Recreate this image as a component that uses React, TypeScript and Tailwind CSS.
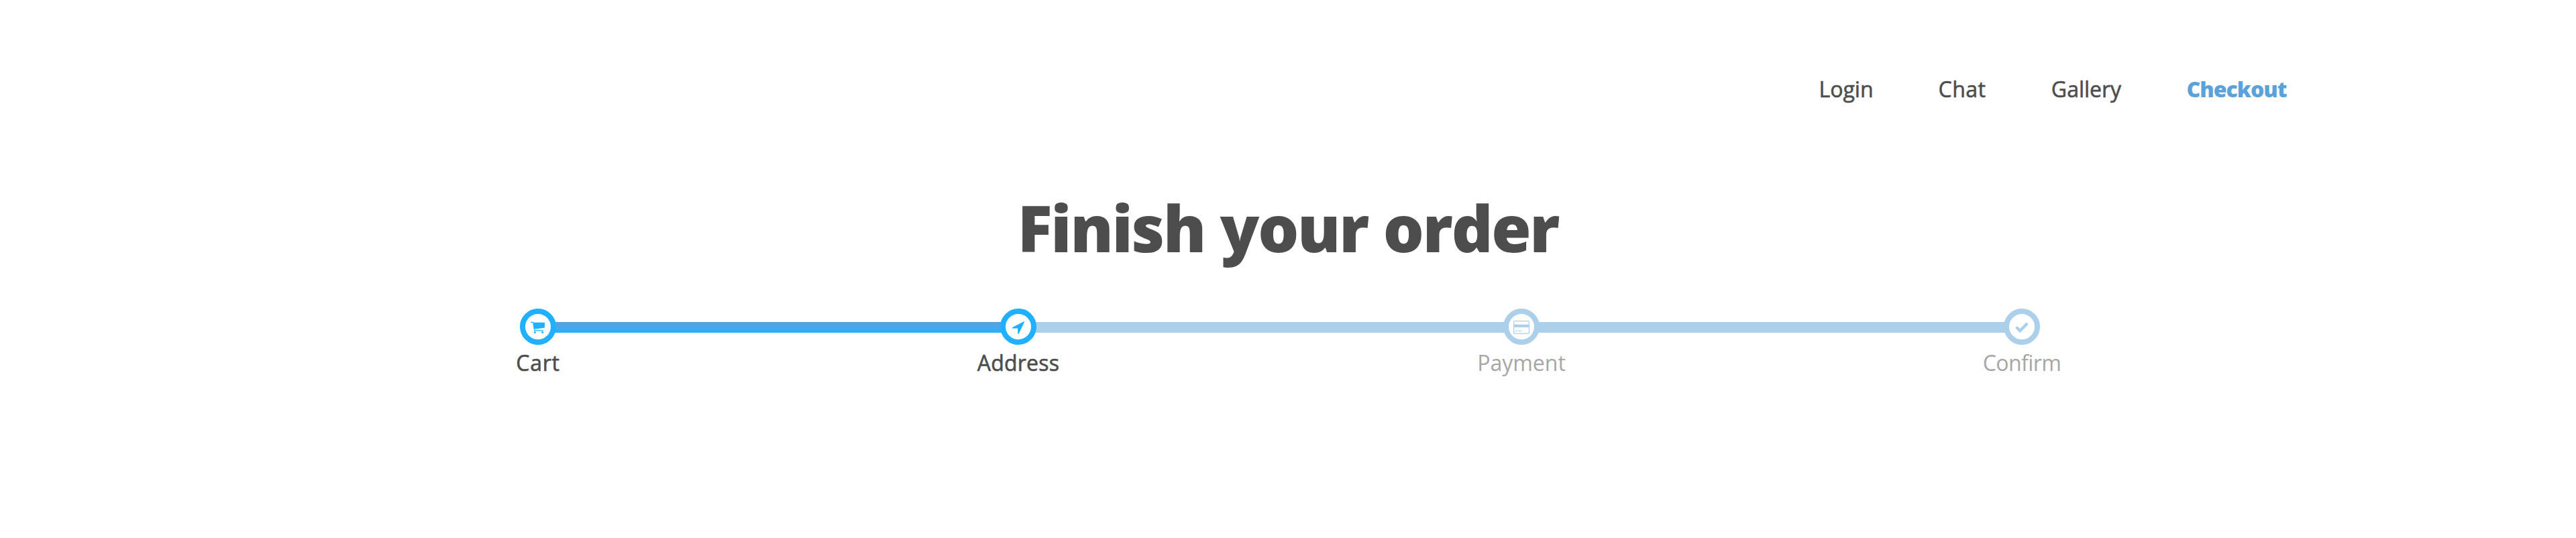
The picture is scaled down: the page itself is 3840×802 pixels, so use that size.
import type { ReactNode } from "react";

const nav = [
  { label: "Login", box: "w-[82px] ml-[2711px]", active: false },
  { label: "Chat", box: "w-[72px] ml-[96px] tracking-[0.5px]", active: false },
  { label: "Gallery", box: "w-[108px] ml-[95px]", active: false },
  { label: "Checkout", box: "w-[150px] ml-[95px]", active: true },
];

function Cart() {
  return (
    <svg viewBox="0 0 24 24" className="h-6 w-6 shrink-0" fill="none" stroke="currentColor">
      <path d="M1.2 5.4H4.6L6.8 17.9H20.3" strokeWidth="1.2" />
      <path d="M5 5.8H22V13.5L6.4 15.8Z" fill="currentColor" stroke="none" />
      <circle cx="7.4" cy="20.6" r="1.5" fill="currentColor" stroke="none" />
      <circle cx="18.7" cy="20.6" r="1.5" fill="currentColor" stroke="none" />
    </svg>
  );
}

function Arrow() {
  return (
    <svg viewBox="0 0 24 24" className="h-6 w-6 shrink-0" fill="currentColor">
      <path d="M21 5.1L12.8 22.2Q11.8 23.6 11.2 22.2V14.6H3.8Q2 14.1 3.3 13L19.8 4.4Q21.5 3.9 21 5.1Z" />
    </svg>
  );
}

function Card() {
  return (
    <svg viewBox="0 0 24 24" className="h-6 w-6 shrink-0" fill="none" stroke="currentColor">
      <rect x="0.6" y="3.6" width="22.8" height="18.6" rx="1.3" strokeWidth="1.2" />
      <path d="M0 10.8H24" strokeWidth="4.2" />
      <path d="M2.7 18.3H6M7.3 18.3H12.3" strokeWidth="1.2" />
    </svg>
  );
}

function Check() {
  return (
    <svg viewBox="0 0 24 24" className="h-6 w-6 shrink-0" fill="none" stroke="currentColor" strokeWidth="4.4">
      <path d="M4.8 13.9L9.2 18.1L19 8.3" strokeLinecap="round" />
    </svg>
  );
}

function Step({ label, done, text, children }: { label: string; done: boolean; text: string; children: ReactNode }) {
  return (
    <div className={`relative z-10 flex w-[54px] shrink-0 flex-col items-center ${done ? "text-[#1fb1ff]" : "text-[#acd0ea]"}`}>
      <div className="flex h-[54px] w-[54px] shrink-0 items-center justify-center rounded-full border-8 border-current bg-white">
        {children}
      </div>
      <span className={`mt-[7px] whitespace-nowrap text-[32px] leading-10 ${text} ${done ? "text-[#4d4d4d] [-webkit-text-stroke:0.6px_#4d4d4d]" : "text-[#a6a6a6]"}`}>
        {label}
      </span>
    </div>
  );
}

export default function App() {
  return (
    <div className="h-[802px] w-[3840px] overflow-hidden bg-white font-['Open_Sans','Noto_Sans',sans-serif] text-[#4d4d4d]">
      <nav className="flex pt-[113px] text-[32px] leading-10">
        {nav.map((n) => (
          <a key={n.label} className={`flex shrink-0 justify-center whitespace-nowrap ${n.box} ${n.active ? "font-extrabold tracking-[-1px] text-[#5ca2da]" : "[-webkit-text-stroke:0.6px_#4d4d4d]"}`}>
            {n.label}
          </a>
        ))}
      </nav>
      <h1 className="mt-[126px] text-center text-[96px] font-extrabold leading-[120px] tracking-[-2.2px]">Finish your order</h1>
      <div className="mt-[61px] flex pl-[775px]">
        <Step label="Cart" done text="tracking-[0.8px]"><Cart /></Step>
        <div className="-mx-1 mt-5 h-4 w-[670px] shrink-0 bg-linear-to-b from-[#5c9fd9] to-[#1fb1ff]" />
        <Step label="Address" done text="tracking-[0.2px]"><Arrow /></Step>
        <div className="-mx-1 mt-5 h-4 w-[704px] shrink-0 bg-[#acd0ea]" />
        <Step label="Payment" done={false} text=""><Card /></Step>
        <div className="-mx-1 mt-5 h-4 w-[700px] shrink-0 bg-[#acd0ea]" />
        <Step label="Confirm" done={false} text="tracking-[-0.6px]"><Check /></Step>
      </div>
    </div>
  );
}
